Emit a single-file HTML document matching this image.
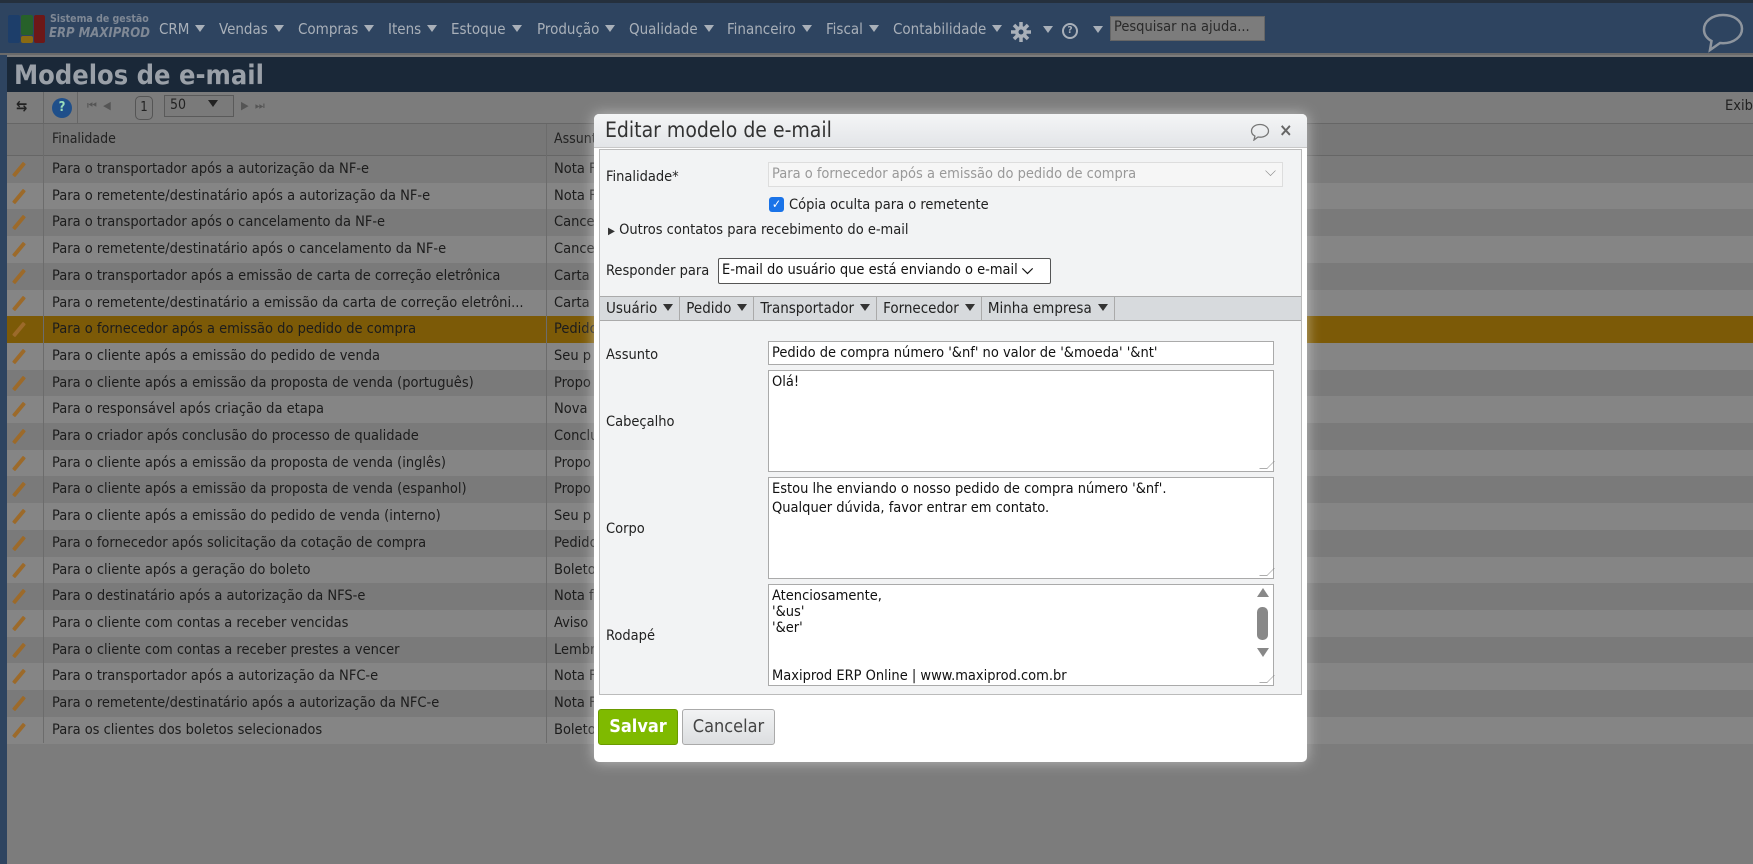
<!DOCTYPE html>
<html><head><meta charset="utf-8"><style>
*{box-sizing:border-box;margin:0;padding:0}
body{width:1753px;height:864px;overflow:hidden;background:#7c7c7c;font-family:"DejaVu Sans Condensed","DejaVu Sans","Liberation Sans",sans-serif;position:relative}
.abs{position:absolute}
#nav{left:0;top:0;width:1753px;height:55px;background:#2e4460;border-top:3px solid #25303d;border-bottom:2px solid #6a6a6a}
.nv{position:absolute;top:17px;color:#a9b0b9;font-size:15px;white-space:nowrap}
.tri{display:inline-block;width:0;height:0;border-left:5px solid transparent;border-right:5px solid transparent;border-top:7px solid #a9b0b9;margin-left:6px;vertical-align:2px}
#leftbar{left:0;top:55px;width:7px;height:809px;background:#2e4460}
#title{left:7px;top:57px;width:1746px;height:35px;background:#1a2838;color:#9aa0a8;font-weight:bold;font-size:27px;padding:3px 0 0 7px}
#tool{left:7px;top:92px;width:1746px;height:32px;background:#7c7c7c;border-bottom:1px solid #666}
#hdr{left:7px;top:124px;width:1746px;height:32px;background:#777;border-bottom:1px solid #666;color:#222;font-size:14px}
.row{position:absolute;left:7px;width:1746px;height:27px;font-size:14.5px;color:#1c1c1c;line-height:27px;white-space:nowrap;background:#7a7a7a}
.row.o{background:#858585}
.row.s{background:#7c5a07}
.row .f{position:absolute;left:45px}
.row .a{position:absolute;left:547px}
.pen{position:absolute;left:10px;top:5px;width:4px;height:17px;background:#9c6a2a;transform:rotate(40deg);border-radius:1px}
.vl{position:absolute;top:124px;width:1px;height:619px;background:#6c6c6c}
#dlg{left:594px;top:114px;width:713px;height:648px;background:#fff;border-radius:5px;box-shadow:0 0 14px rgba(255,255,255,.5)}
#dh{left:0;top:0;width:713px;height:34px;background:linear-gradient(#f4f5f6,#e3e5e8);border-radius:5px 5px 0 0;border-bottom:1px solid #c8c8c8;font-size:21px;color:#333;padding:4px 0 0 11px}
#panel{left:5px;top:35px;width:703px;height:546px;background:#f2f3f4;border:1px solid #bbb}
.lbl{position:absolute;font-size:14.5px;color:#222;white-space:nowrap}
.inp{position:absolute;background:#fff;border:1px solid #aaa;font-size:14.5px;color:#111;padding:2px 3px;line-height:19px;white-space:pre}
.rs{position:absolute;right:2px;bottom:2px;width:8px;height:8px;border-right:1px solid #777;border-bottom:1px solid #777;transform:skewX(-45deg);opacity:.6}
.tab{display:inline-block;height:24px;line-height:23px;padding:0 6px;border-right:1px solid #aaa;font-size:15px;color:#222}
.tab .tri{border-top-color:#333;margin-left:6px}
</style></head><body>
<div id="nav" class="abs">
 <div class="abs" style="left:8px;top:12px;width:12px;height:28px;background:#1d3e6a;border-radius:2px"></div>
 <div class="abs" style="left:21px;top:12px;width:12px;height:20px;background:#27612a;border-radius:2px"></div>
 <div class="abs" style="left:21px;top:33px;width:12px;height:7px;background:#8a6a12;border-radius:2px"></div>
 <div class="abs" style="left:34px;top:12px;width:11px;height:28px;background:#6d1818;border-radius:2px"></div>
 <div class="abs" style="left:50px;top:10px;color:#7f8895;font-size:10.5px;font-weight:bold">Sistema de gestão</div>
 <div class="abs" style="left:49px;top:23px;color:#7f8895;font-size:13px;font-weight:bold;font-style:italic">ERP MAXIPROD</div>
 <div class="nv" style="left:159px">CRM<span class="tri"></span></div>
 <div class="nv" style="left:219px">Vendas<span class="tri"></span></div>
 <div class="nv" style="left:298px">Compras<span class="tri"></span></div>
 <div class="nv" style="left:388px">Itens<span class="tri"></span></div>
 <div class="nv" style="left:451px">Estoque<span class="tri"></span></div>
 <div class="nv" style="left:537px">Produção<span class="tri"></span></div>
 <div class="nv" style="left:629px">Qualidade<span class="tri"></span></div>
 <div class="nv" style="left:727px">Financeiro<span class="tri"></span></div>
 <div class="nv" style="left:826px">Fiscal<span class="tri"></span></div>
 <div class="nv" style="left:893px">Contabilidade<span class="tri"></span></div>
 <svg class="abs" style="left:1010px;top:18px" width="22" height="22" viewBox="0 0 22 22"><g stroke="#a9b0b9" stroke-width="3.5"><line x1="11" y1="1" x2="11" y2="21"/><line x1="1" y1="11" x2="21" y2="11"/><line x1="4" y1="4" x2="18" y2="18"/><line x1="18" y1="4" x2="4" y2="18"/></g><circle cx="11" cy="11" r="6" fill="#a9b0b9"/><circle cx="11" cy="11" r="2.5" fill="#2e4460"/></svg>
 <span class="tri abs" style="left:1037px;top:23px"></span>
 <div class="abs" style="left:1062px;top:20px;width:16px;height:16px;border:2px solid #a9b0b9;border-radius:50%;color:#a9b0b9;font-size:10px;text-align:center;line-height:12px;font-weight:bold">?</div><span class="tri abs" style="left:1087px;top:23px"></span>
 <div class="abs" style="left:1110px;top:13px;width:155px;height:25px;background:#7c7c7c;border:1px solid #666;font-size:14.5px;color:#2a2a2a;padding:2px 3px">Pesquisar na ajuda...</div>
 <svg class="abs" style="left:1700px;top:8px" width="46" height="44" viewBox="0 0 46 44"><path d="M23 4C12 4 4 10.5 4 18.5c0 5 3 9 7.5 11.5L10 39l10-7c1 .1 2 .2 3 .2 11 0 19-6.5 19-14.5S34 4 23 4z" fill="none" stroke="#8e959e" stroke-width="2.5"/></svg>
</div>
<div id="leftbar" class="abs"></div>
<div id="title" class="abs">Modelos de e-mail</div>
<div id="tool" class="abs">
 <div class="abs" style="left:9px;top:5px;font-size:15px;color:#222;font-weight:bold">⇆</div>
 <div class="abs" style="left:36px;top:0;width:1px;height:31px;background:#666"></div>
 <div class="abs" style="left:45px;top:6px;width:20px;height:20px;border-radius:50%;background:#1f4f8a;color:#9db;font-size:13px;font-weight:bold;text-align:center;line-height:20px">?</div>
 <div class="abs" style="left:70px;top:0;width:1px;height:31px;background:#666"></div>
 <div class="abs" style="left:80px;top:7px;font-size:11px;color:#555">⏮ &nbsp;◀</div>
 <div class="abs" style="left:128px;top:4px;width:18px;height:24px;border:1px solid #555;border-radius:5px;font-size:13px;text-align:center;line-height:22px;color:#222">1</div>
 <div class="abs" style="left:157px;top:3px;width:70px;height:22px;border:1px solid #5a5a5a;background:#7a7a7a;font-size:14px;color:#222;padding:1px 5px">50<span class="tri" style="border-top-color:#222;margin-left:22px"></span></div>
 <div class="abs" style="left:234px;top:7px;font-size:11px;color:#555">▶ &nbsp;⏭</div>
 <div class="abs" style="left:1718px;top:6px;font-size:14.5px;color:#222">Exibi</div>
</div>
<div id="hdr" class="abs"><span class="abs" style="left:45px;top:7px">Finalidade</span><span class="abs" style="left:547px;top:7px">Assunto</span></div>
<div class="row" style="top:156px"><span class="pen"></span><span class="f">Para o transportador após a autorização da NF-e</span><span class="a">Nota F</span></div>
<div class="row o" style="top:182.7px"><span class="pen"></span><span class="f">Para o remetente/destinatário após a autorização da NF-e</span><span class="a">Nota F</span></div>
<div class="row" style="top:209.4px"><span class="pen"></span><span class="f">Para o transportador após o cancelamento da NF-e</span><span class="a">Cance</span></div>
<div class="row o" style="top:236.1px"><span class="pen"></span><span class="f">Para o remetente/destinatário após o cancelamento da NF-e</span><span class="a">Cance</span></div>
<div class="row" style="top:262.8px"><span class="pen"></span><span class="f">Para o transportador após a emissão de carta de correção eletrônica</span><span class="a">Carta</span></div>
<div class="row o" style="top:289.5px"><span class="pen"></span><span class="f">Para o remetente/destinatário a emissão da carta de correção eletrôni...</span><span class="a">Carta</span></div>
<div class="row s" style="top:316.2px"><span class="pen"></span><span class="f">Para o fornecedor após a emissão do pedido de compra</span><span class="a">Pedido</span></div>
<div class="row o" style="top:342.9px"><span class="pen"></span><span class="f">Para o cliente após a emissão do pedido de venda</span><span class="a">Seu p</span></div>
<div class="row" style="top:369.6px"><span class="pen"></span><span class="f">Para o cliente após a emissão da proposta de venda (português)</span><span class="a">Propo</span></div>
<div class="row o" style="top:396.3px"><span class="pen"></span><span class="f">Para o responsável após criação da etapa</span><span class="a">Nova</span></div>
<div class="row" style="top:423px"><span class="pen"></span><span class="f">Para o criador após conclusão do processo de qualidade</span><span class="a">Conclu</span></div>
<div class="row o" style="top:449.7px"><span class="pen"></span><span class="f">Para o cliente após a emissão da proposta de venda (inglês)</span><span class="a">Propo</span></div>
<div class="row" style="top:476.4px"><span class="pen"></span><span class="f">Para o cliente após a emissão da proposta de venda (espanhol)</span><span class="a">Propo</span></div>
<div class="row o" style="top:503.1px"><span class="pen"></span><span class="f">Para o cliente após a emissão do pedido de venda (interno)</span><span class="a">Seu p</span></div>
<div class="row" style="top:529.8px"><span class="pen"></span><span class="f">Para o fornecedor após solicitação da cotação de compra</span><span class="a">Pedido</span></div>
<div class="row o" style="top:556.5px"><span class="pen"></span><span class="f">Para o cliente após a geração do boleto</span><span class="a">Boleto</span></div>
<div class="row" style="top:583.2px"><span class="pen"></span><span class="f">Para o destinatário após a autorização da NFS-e</span><span class="a">Nota f</span></div>
<div class="row o" style="top:609.9px"><span class="pen"></span><span class="f">Para o cliente com contas a receber vencidas</span><span class="a">Aviso</span></div>
<div class="row" style="top:636.6px"><span class="pen"></span><span class="f">Para o cliente com contas a receber prestes a vencer</span><span class="a">Lembr</span></div>
<div class="row o" style="top:663.3px"><span class="pen"></span><span class="f">Para o transportador após a autorização da NFC-e</span><span class="a">Nota F</span></div>
<div class="row" style="top:690px"><span class="pen"></span><span class="f">Para o remetente/destinatário após a autorização da NFC-e</span><span class="a">Nota F</span></div>
<div class="row o" style="top:716.7px"><span class="pen"></span><span class="f">Para os clientes dos boletos selecionados</span><span class="a">Boleto</span></div>
<div class="vl" style="left:43px"></div><div class="vl" style="left:546px"></div>
<div id="dlg" class="abs">
 <div id="dh" class="abs">Editar modelo de e-mail
  <svg class="abs" style="left:656px;top:9px" width="20" height="18" viewBox="0 0 20 18"><path d="M10 1.5C5 1.5 1.5 4.3 1.5 8c0 2.2 1.3 4 3.4 5.1L4 17l4-3c.7.1 1.3.2 2 .2 5 0 8.5-2.8 8.5-6.2S15 1.5 10 1.5z" fill="none" stroke="#777" stroke-width="1.3"/></svg>
  <div class="abs" style="left:685px;top:6px;font-size:18px;font-weight:bold;color:#666">×</div>
 </div>
 <div id="panel" class="abs">
  <div class="lbl" style="left:6px;top:19px">Finalidade*</div>
  <div class="inp" style="left:168px;top:12px;width:515px;height:25px;border-color:#ddd;background:#f6f6f6;color:#999">Para o fornecedor após a emissão do pedido de compra<span style="position:absolute;right:6px;top:0;color:#888">⌵</span></div>
  <div class="abs" style="left:169px;top:47px;width:15px;height:15px;background:#1a73e8;border-radius:3px;color:#fff;font-size:12px;line-height:15px;text-align:center">✓</div>
  <div class="lbl" style="left:189px;top:47px">Cópia oculta para o remetente</div>
  <div class="lbl" style="left:8px;top:72px"><span style="font-size:10px;color:#333">▶</span> Outros contatos para recebimento do e-mail</div>
  <div class="lbl" style="left:6px;top:113px">Responder para</div>
  <div class="inp" style="left:118px;top:108px;width:333px;height:26px;border-color:#555;border-radius:2px;line-height:19px">E-mail do usuário que está enviando o e-mail <span style="font-weight:bold">⌵</span></div>
  <div class="abs" style="left:0;top:146px;width:701px;height:25px;background:#d7dadd;border-top:1px solid #aaa;border-bottom:1px solid #aaa"><span class="tab">Usuário<span class="tri"></span></span><span class="tab">Pedido<span class="tri"></span></span><span class="tab">Transportador<span class="tri"></span></span><span class="tab">Fornecedor<span class="tri"></span></span><span class="tab">Minha empresa<span class="tri"></span></span></div>
  <div class="lbl" style="left:6px;top:197px">Assunto</div>
  <div class="inp" style="left:168px;top:191px;width:506px;height:24px">Pedido de compra número '&amp;nf' no valor de '&amp;moeda' '&amp;nt'</div>
  <div class="lbl" style="left:6px;top:264px">Cabeçalho</div>
  <div class="inp" style="left:168px;top:220px;width:506px;height:102px">Olá!<span class="rs"></span></div>
  <div class="lbl" style="left:6px;top:371px">Corpo</div>
  <div class="inp" style="left:168px;top:327px;width:506px;height:102px">Estou lhe enviando o nosso pedido de compra número '&amp;nf'.
Qualquer dúvida, favor entrar em contato.<span class="rs"></span></div>
  <div class="lbl" style="left:6px;top:478px">Rodapé</div>
  <div class="inp" style="left:168px;top:434px;width:506px;height:102px;padding-top:3px;line-height:16px">Atenciosamente,
'&amp;us'
'&amp;er'


Maxiprod ERP Online | www.maxiprod.com.br
   <span class="abs" style="right:4px;top:3px;width:0;height:0;border-left:6px solid transparent;border-right:6px solid transparent;border-bottom:9px solid #888"></span>
   <span class="abs" style="right:5px;top:22px;width:11px;height:33px;background:#888;border-radius:5px"></span>
   <span class="abs" style="right:4px;top:63px;width:0;height:0;border-left:6px solid transparent;border-right:6px solid transparent;border-top:9px solid #888"></span>
   <span class="rs"></span></div>
 </div>
 <div class="abs" style="left:4px;top:595px;width:80px;height:36px;background:#7fba00;border:1px solid #6a9a00;border-radius:3px;color:#fff;font-weight:bold;font-size:18px;text-align:center;line-height:34px">Salvar</div>
 <div class="abs" style="left:88px;top:595px;width:93px;height:36px;background:linear-gradient(#f2f3f4,#dcdee0);border:1px solid #aaa;border-radius:3px;color:#444;font-size:18px;text-align:center;line-height:34px">Cancelar</div>
</div>
</body></html>
